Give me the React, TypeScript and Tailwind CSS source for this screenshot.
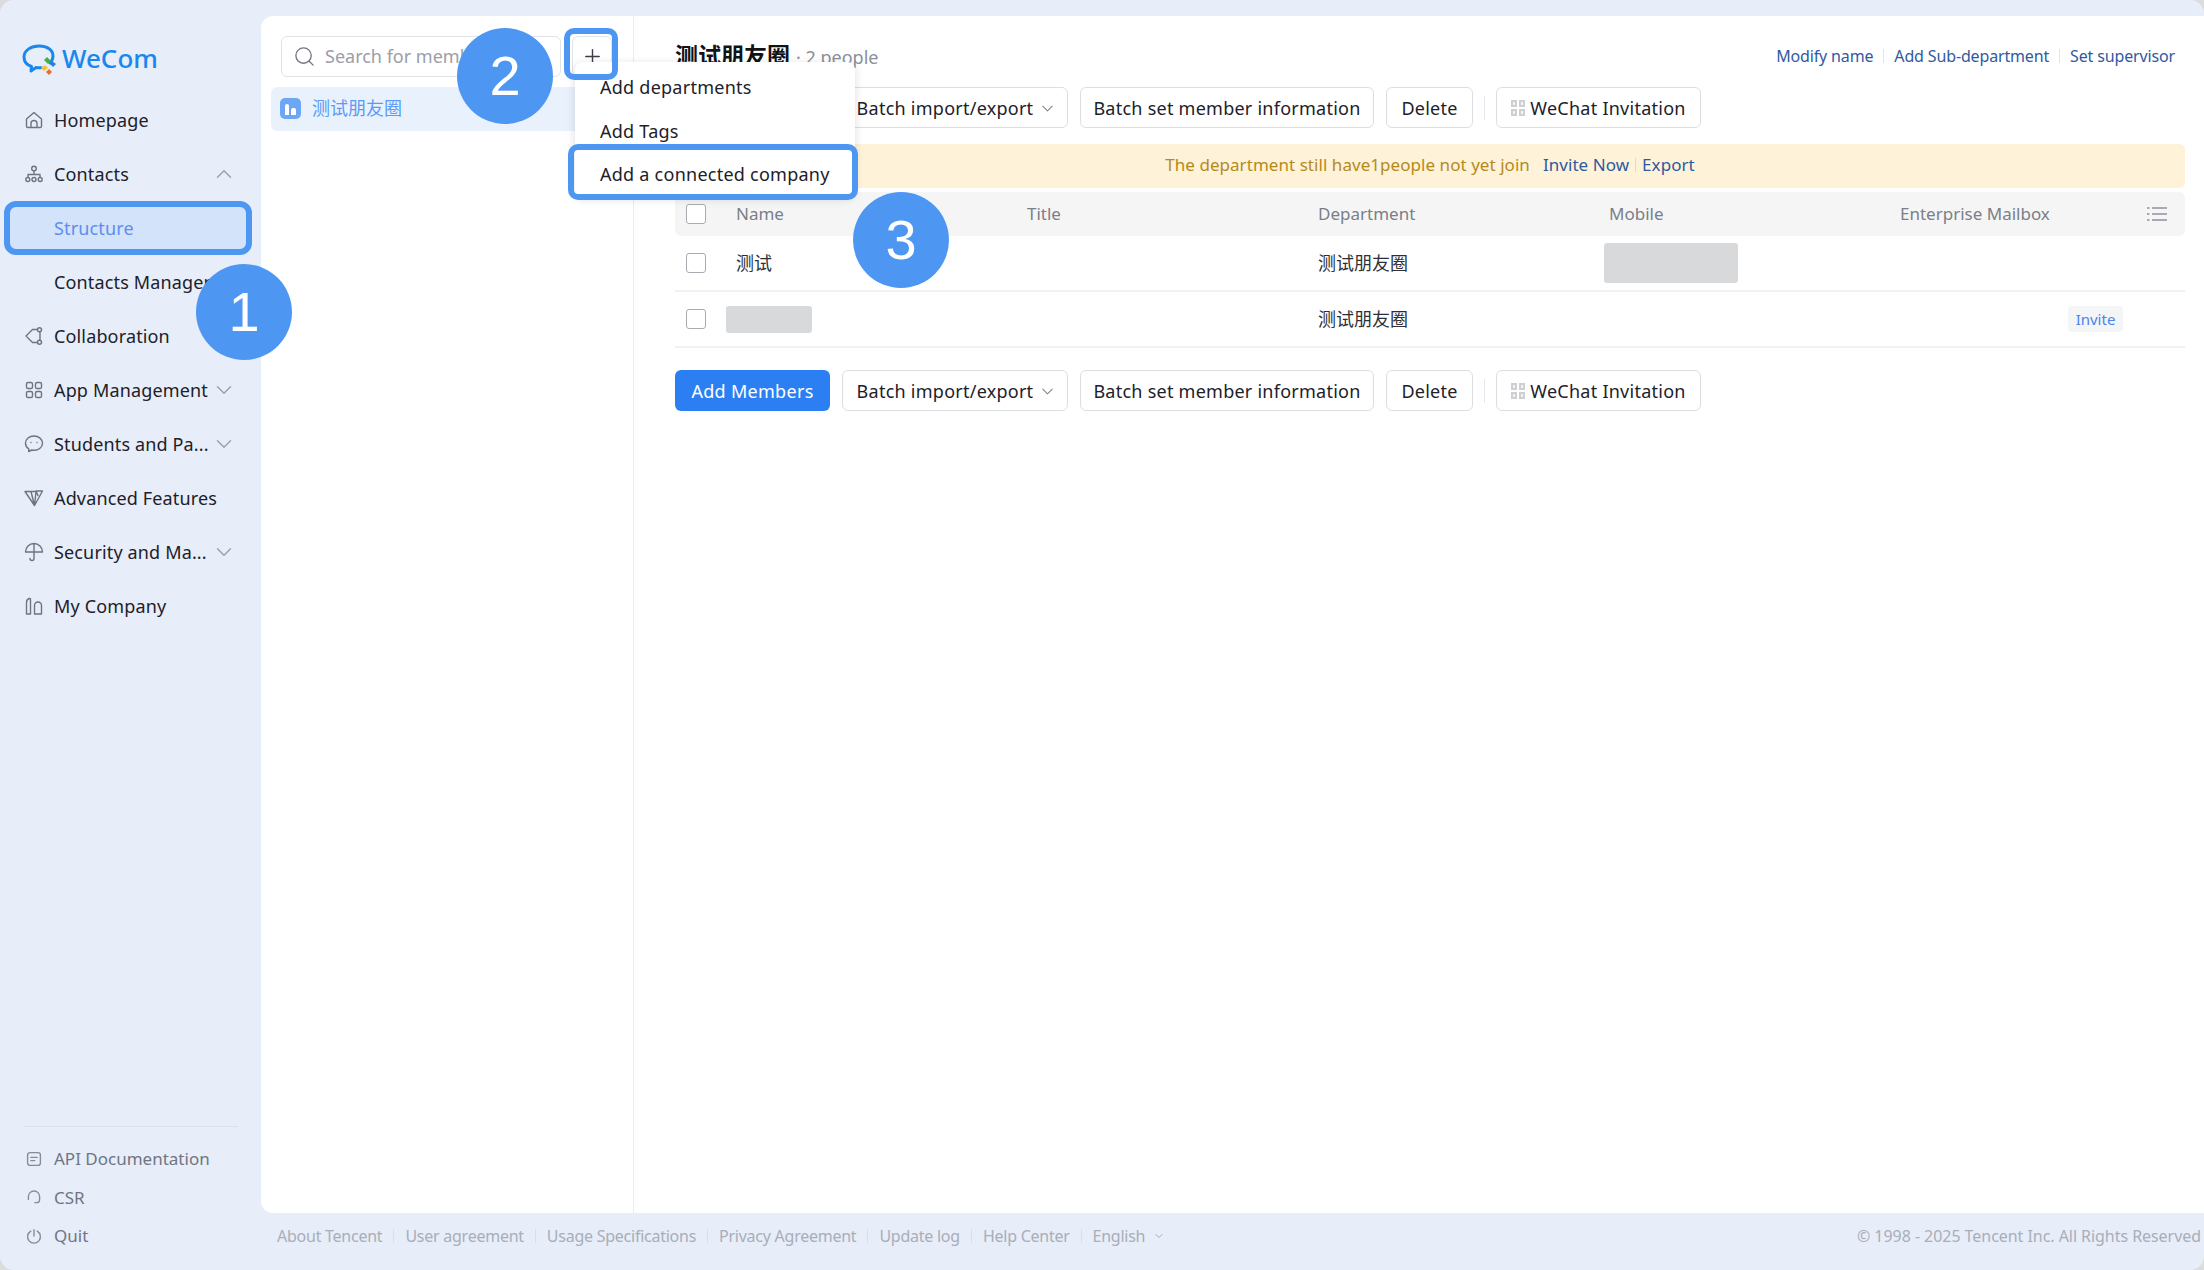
import { ChevronDown, ChevronUp, Plus, Search } from "lucide-react"
import type { ReactNode } from "react"

const fontStack = "font-['Noto_Sans','Noto_Sans_CJK_SC',sans-serif]"

function Glyph({ children, size = 20, weight = 1.4 }: { children: ReactNode; size?: number; weight?: number }) {
  return (
    <svg width={size} height={size} viewBox="0 0 20 20" fill="none" stroke="currentColor" strokeWidth={weight} strokeLinecap="round" strokeLinejoin="round">
      {children}
    </svg>
  )
}

const icons = {
  home: <path d="M2.5 9 10 2.5 17.5 9v7.2a1.3 1.3 0 0 1-1.3 1.3H3.8a1.3 1.3 0 0 1-1.3-1.3V9ZM7 17.5v-4a3 3 0 0 1 6 0v4" />,
  org: (
    <>
      <circle cx="10" cy="4.5" r="2.3" />
      <path d="M10 7v3.5M4 13v-2.5h12V13" />
      <circle cx="3.8" cy="15.5" r="2" />
      <circle cx="10" cy="15.5" r="2" />
      <circle cx="16.2" cy="15.5" r="2" />
    </>
  ),
  collab: (
    <>
      <path d="M13.5 3.5H8.500L2 10l6.500 6.500h5M16 6v8" />
      <circle cx="15.500" cy="3.800" r="2" />
      <circle cx="15.500" cy="16.200" r="2" />
    </>
  ),
  apps: (
    <>
      <rect x="2.500" y="2.500" width="6" height="6" rx="1.600" />
      <rect x="11.500" y="2.500" width="6" height="6" rx="1.600" />
      <rect x="2.500" y="11.500" width="6" height="6" rx="1.600" />
      <rect x="11.500" y="11.500" width="6" height="6" rx="1.600" />
    </>
  ),
  chat: (
    <>
      <path d="M10 2C5.300 2 1.500 5 1.500 9.200c0 2.400 1.200 4.400 3.200 5.700v2.600l3-1.500c.8.200 1.500.300 2.300.300 4.700 0 8.500-3.100 8.500-7.100S14.700 2 10 2Z" />
      <path d="M7 8.500h.01M13 8.500h.01" />
    </>
  ),
  vee: <path d="M1 3.500h11L10.500 17.500 1 3.500Zm6 0 3.500 14L18.500 3h-6.500l2 4.500" />,
  umbrella: <path d="M1.500 10a8.500 8.500 0 0 1 17 0h-17ZM10 1.500V16.500a2 2 0 0 1-4 0" />,
  company: (
    <>
      <path d="M2.500 18V6.500c0-1.800 1-3.300 2.700-4 .8-.3 1.300.2 1.300 1V18h-4ZM10.500 18V9.500a3.500 3.500 0 0 1 7 0V18h-7Z" />
    </>
  ),
  api: (
    <>
      <rect x="2" y="2" width="16" height="16" rx="3" />
      <path d="M6 8h8M6 12h5" />
    </>
  ),
  headset: <path d="M3 12V9.500a7 7 0 0 1 14 0V13a4 4 0 0 1-4 4h-2M3 10v3M17 10v3" />,
  power: <path d="M10 2v8M6 4a8 8 0 1 0 8 0" />,
}

function NavItem({ icon, label, chevron }: { icon: ReactNode; label: string; chevron?: "up" | "down" }) {
  return (
    <div className="flex h-[54px] items-center pl-[24px] pr-[24px] text-[18px] tracking-[0.15px] text-[#1d2129]">
      <span className="mr-[10px] flex w-[20px] justify-center text-[#6e7480]">
        <Glyph>{icon}</Glyph>
      </span>
      <span className="flex-1 whitespace-nowrap">{label}</span>
      {chevron === "down" && <ChevronDown className="size-[26px] text-[#9aa0aa]" strokeWidth={1.3} />}
      {chevron === "up" && <ChevronUp className="size-[26px] text-[#9aa0aa]" strokeWidth={1.3} />}
    </div>
  )
}

function BottomLink({ icon, label }: { icon: ReactNode; label: string }) {
  return (
    <div className="flex h-[38.500px] items-center pl-[26px] text-[17px] text-[#6f7683]">
      <span className="mr-[12px] flex w-[16px] justify-center text-[#868c97]">
        <Glyph size={16} weight={1.7}>{icon}</Glyph>
      </span>
      {label}
    </div>
  )
}

function Sidebar() {
  return (
    <aside className="relative flex w-[261px] shrink-0 flex-col">
      <div className="flex h-[93px] items-end pb-[17px] pl-[21px]">
        <svg width="38" height="32" viewBox="0 0 38 32" fill="none">
          <path d="M29 19c2-2 3-4.500 3-7C32 5.500 25.500 2 18 2S3 6 3 13c0 4.500 3 8 7.500 9.500L10 27l5-3.500c2 .300 3.500.300 5 .200" stroke="#1a87ef" strokeWidth="3" strokeLinecap="round" strokeLinejoin="round" />
          <path d="m26 13 4 4-3 3-4-4z" fill="#43b244" />
          <path d="m31 17 4 3-3 3-3-3z" fill="#2b7fe0" />
          <path d="m24 21 3 3-4 3-3-3z" fill="#f2c230" />
          <path d="m28 25 3 3-3 3-3-3z" fill="#ef6b2c" />
        </svg>
        <span className="ml-[3px] text-[26px] font-medium leading-[36px] text-[#1a87ef]">WeCom</span>
      </div>
      <NavItem icon={icons.home} label="Homepage" />
      <NavItem icon={icons.org} label="Contacts" chevron="up" />
      <div className="mx-[4px] flex h-[54px] w-[248px] items-center rounded-[12px] border-[6px] border-[#4d97f3] bg-[#d3e3fa] pl-[44px] text-[18px] tracking-[0.15px] text-[#5b8ff0]">
        Structure
      </div>
      <div className="flex h-[54px] items-center whitespace-nowrap pl-[54px] text-[18px] tracking-[0.15px] text-[#1d2129]">Contacts Management</div>
      <NavItem icon={icons.collab} label="Collaboration" />
      <NavItem icon={icons.apps} label="App Management" chevron="down" />
      <NavItem icon={icons.chat} label="Students and Pa..." chevron="down" />
      <NavItem icon={icons.vee} label="Advanced Features" />
      <NavItem icon={icons.umbrella} label="Security and Ma..." chevron="down" />
      <NavItem icon={icons.company} label="My Company" />
      <div className="mt-auto pb-[15px]">
        <div className="mx-[23px] mb-[13px] h-[1px] bg-[#dbe2ee]" />
        <BottomLink icon={icons.api} label="API Documentation" />
        <BottomLink icon={icons.headset} label="CSR" />
        <BottomLink icon={icons.power} label="Quit" />
      </div>
    </aside>
  )
}

function ToolButton({ className, children }: { className: string; children: ReactNode }) {
  return (
    <button type="button" className={`flex h-[41px] items-center justify-center whitespace-nowrap rounded-[6px] border border-[#dcdee2] bg-white pt-[1px] text-[18px] tracking-[0.25px] text-[#1d2129] ${className}`}>
      {children}
    </button>
  )
}

function QrMark() {
  return (
    <svg width="14" height="16" viewBox="0 0 14 16" fill="#cdcfd3" className="mr-[5px]">
      <path d="M0 0h6v7H0zM8 0h6v7H8zM0 9h6v7H0zM8 9h6v7H8z" />
      <path d="M2 2h2v3H2zM10 2h2v3h-2zM2 11h2v3H2zM10 11h2v3h-2z" fill="#f4f4f5" />
    </svg>
  )
}

function Toolbar() {
  return (
    <div className="flex items-center">
      <button type="button" className="h-[41px] w-[155px] rounded-[6px] bg-[#2b7ff2] pt-[1px] text-[18px] tracking-[0.3px] text-white">
        Add Members
      </button>
      <div className="ml-[12px] flex items-center gap-[12px]">
        <ToolButton className="w-[226px] pl-[4px]">
          Batch import/export
          <ChevronDown className="ml-[5px] size-[19px] text-[#7d828c]" strokeWidth={1.3} />
        </ToolButton>
        <ToolButton className="w-[294px]">Batch set member information</ToolButton>
        <ToolButton className="w-[87px]">Delete</ToolButton>
      </div>
      <span className="mx-[11px] h-[24px] w-[1px] bg-[#e6e7ea]" />
      <ToolButton className="w-[205px]">
        <QrMark />
        WeChat Invitation
      </ToolButton>
    </div>
  )
}

function Checkbox() {
  return <span className="ml-[11px] block size-[20px] rounded-[3px] border border-[#a9abb0] bg-white" />
}

const rowGrid = "grid grid-cols-[51px_291px_291px_291px_291px_1fr] items-center"

function Table() {
  return (
    <div className="mt-[4px]">
      <div className={`${rowGrid} h-[44px] rounded-[6px] bg-[#f5f5f6] text-[17px] text-[#7a7f88]`}>
        <Checkbox />
        <span className="pl-[10px]">Name</span>
        <span className="pl-[10px]">Title</span>
        <span className="pl-[10px]">Department</span>
        <span className="pl-[10px]">Mobile</span>
        <div className="flex items-center justify-between pl-[10px] pr-[18px]">
          <span>Enterprise Mailbox</span>
          <svg width="20" height="18" viewBox="0 0 20 18" fill="none" stroke="#8d929b" strokeWidth="1.4">
            <path d="M0 3h2.500M5 3h15M0 9h2.500M5 9h15M0 15h2.500M5 15h15" />
          </svg>
        </div>
      </div>
      <div className={`${rowGrid} h-[56px] border-b-2 border-[#f1f1f3] text-[18px] text-[#2c3038]`}>
        <Checkbox />
        <span className="pl-[10px]">测试</span>
        <span />
        <span className="pl-[10px]">测试朋友圈</span>
        <span className="ml-[5px] h-[40px] w-[134px] rounded-[3px] bg-[#d8d9db]" />
        <span />
      </div>
      <div className={`${rowGrid} h-[56px] border-b-2 border-[#f1f1f3] text-[18px] text-[#2c3038]`}>
        <Checkbox />
        <span className="h-[27px] w-[86px] rounded-[3px] bg-[#d8d9db]" />
        <span />
        <span className="pl-[10px]">测试朋友圈</span>
        <span />
        <div className="flex justify-end pr-[62px]">
          <span className="flex h-[26px] w-[55px] items-center justify-center rounded-[4px] bg-[#f3f5f7] text-[15px] text-[#4a84ee]">Invite</span>
        </div>
      </div>
    </div>
  )
}

function DepartmentPane() {
  return (
    <div className="flex min-w-0 flex-1 flex-col pl-[41px] pr-[19px]">
      <div className="flex h-[71px] shrink-0 items-center justify-between pr-[10px] pt-[8px]">
        <div className="flex items-baseline">
          <span className="text-[23px] font-bold text-[#111317]">测试朋友圈</span>
          <span className="ml-[6px] text-[18px] text-[#8a8f99]">· 2 people</span>
        </div>
        <div className="flex items-center text-[16px] tracking-[-0.15px] text-[#2f5aa0]">
          <span>Modify name</span>
          <span className="mx-[10px] h-[14px] w-[1px] bg-[#e3e4e7]" />
          <span>Add Sub-department</span>
          <span className="mx-[10px] h-[14px] w-[1px] bg-[#e3e4e7]" />
          <span>Set supervisor</span>
        </div>
      </div>
      <Toolbar />
      <div className="mt-[16px] flex h-[44px] items-center justify-center rounded-[6px] bg-[#fef2d8] pb-[2px] text-[17px] tracking-[0.05px]">
        <span className="text-[#b58a1a]">The department still have1people not yet join</span>
        <span className="ml-[13px] text-[#2f5aa0]">Invite Now</span>
        <span className="mx-[6px] h-[14px] w-[1px] bg-[#e8dcc0]" />
        <span className="text-[#2f5aa0]">Export</span>
      </div>
      <Table />
      <div className="mt-[22px]">
        <Toolbar />
      </div>
    </div>
  )
}

function TreePane() {
  return (
    <div className="w-[373px] shrink-0 border-r border-[#ececee]">
      <div className="flex items-center pl-[20px] pr-[21px] pt-[20px]">
        <div className="flex h-[41px] w-[280px] items-center rounded-[6px] border border-[#e2e3e6] pl-[11px] text-[18px] text-[#9a9ea8]">
          <Search className="mr-[9px] size-[23px] text-[#70757f]" strokeWidth={1.4} />
          Search for members
        </div>
        <div className="ml-[11px] flex h-[41px] w-[40px] items-center justify-center rounded-[6px] border border-[#e2e3e6] text-[#3b3f46]">
          <Plus className="size-[23px]" strokeWidth={1.5} />
        </div>
      </div>
      <div className="mx-[10px] mt-[10px] flex h-[44px] items-center rounded-[6px] bg-[#e9f1fd] pb-[2px] pl-[9px] text-[18px] text-[#5b9bf5]">
        <span className="mr-[11px] flex size-[21px] items-end justify-center gap-[2px] rounded-[5px] bg-[#6ea6f6] pb-[4px]">
          <span className="h-[11px] w-[4px] rounded-t-[2px] bg-white" />
          <span className="h-[7px] w-[5px] rounded-t-[2px] bg-white" />
        </span>
        测试朋友圈
      </div>
    </div>
  )
}

const footerLinks = ["About Tencent", "User agreement", "Usage Specifications", "Privacy Agreement", "Update log", "Help Center"]

function Footer() {
  return (
    <footer className="flex h-[57px] shrink-0 items-center justify-between pb-[11px] pl-[16px] pr-[3px] text-[16px] text-[#a9aeb8]">
      <div className="flex items-center tracking-[-0.25px]">
        {footerLinks.map((link) => (
          <div key={link} className="flex items-center">
            <span>{link}</span>
            <span className="mx-[11px] h-[14px] w-[1px] bg-[#d8deea]" />
          </div>
        ))}
        <span>English</span>
        <ChevronDown className="ml-[8px] size-[12px]" strokeWidth={2} />
      </div>
      <span className="tracking-[-0.05px]">© 1998 - 2025 Tencent Inc. All Rights Reserved</span>
    </footer>
  )
}

function Callout({ className, children }: { className: string; children: string }) {
  return (
    <div className={`absolute z-30 flex size-[96px] items-center justify-center rounded-full bg-[#4d97f3] font-['Liberation_Sans',sans-serif] text-[56px] text-white ${className}`}>
      {children}
    </div>
  )
}

export default function App() {
  return (
    <div className={`relative h-[1270px] w-[2204px] overflow-hidden bg-[#dcdcdc] ${fontStack}`}>
      <div className="flex h-full overflow-hidden rounded-[14px] bg-[#e7edf9]">
        <Sidebar />
        <div className="flex min-w-0 flex-1 flex-col pt-[16px]">
          <main className="flex min-h-0 flex-1 rounded-l-[12px] bg-white">
            <TreePane />
            <DepartmentPane />
          </main>
          <Footer />
        </div>
      </div>

      {/* Add menu */}
      <div className="absolute left-[575px] top-[62px] z-10 h-[135px] w-[280px] rounded-[8px] bg-white pl-[25px] pt-[3px] text-[18px] tracking-[0.25px] text-[#1d2129] shadow-[0_2px_10px_rgba(0,0,0,0.14)]">
        <div className="flex h-[44px] items-center">Add departments</div>
        <div className="flex h-[44px] items-center">Add Tags</div>
        <div className="flex h-[44px] items-center pb-[2px]">Add a connected company</div>
      </div>

      {/* Tutorial highlights */}
      <div className="absolute left-[564px] top-[28px] z-20 h-[52px] w-[54px] rounded-[10px] border-[6px] border-[#4d97f3]" />
      <div className="absolute left-[568px] top-[144px] z-20 h-[56px] w-[290px] rounded-[10px] border-[6px] border-[#4d97f3]" />
      <Callout className="left-[196px] top-[264px]">1</Callout>
      <Callout className="left-[457px] top-[28px]">2</Callout>
      <Callout className="left-[853px] top-[192px]">3</Callout>
    </div>
  )
}
